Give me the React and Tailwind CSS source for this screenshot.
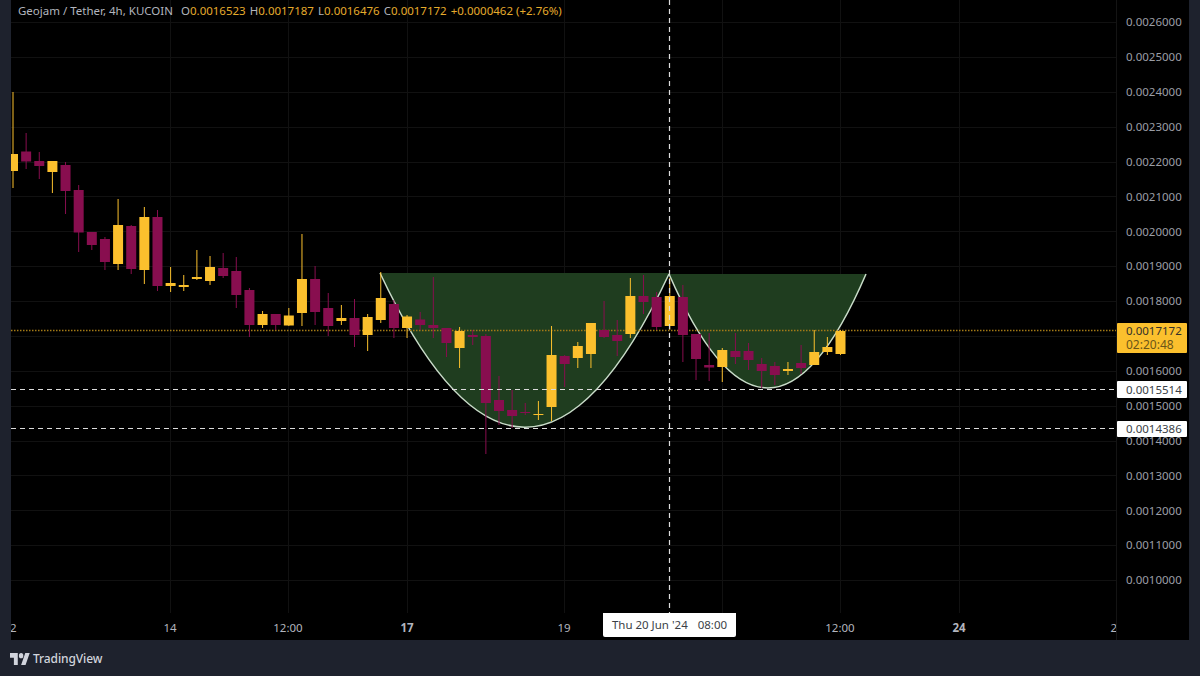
const Y = "#fbc02d";
const M = "#880e4f";
// colour, body top, body bottom, wick top, wick bottom
const bars = [
  ["y",154,171,92,188],["m",151.5,161.5,133,169],["m",161,166,152,179],["y",161,172,161,193],["m",165,191,162,214],
  ["m",190,232.5,185,252],["m",232,245,232,250],["m",239,262,237,270],["y",225,264,199,270],["m",226,269,225,274],
  ["y",217,270,207,284],["m",217,286,210,291],["y",283,286,267,292],["y",285,287,275,291],["y",277,279,250,280],
  ["y",267,281,256,285],["m",268,276,253,278],["m",271,295,257,308],["m",290,325,288,337],["y",314,325,311,328],
  ["m",314,325,314,330],["y",315.5,325.5,308,326],["y",279,313,234,326],["m",279,312,266,325],["m",308,326,293,336],
  ["y",318,321,305,325],["m",318,335,299,347],["y",317,335,314,351],["y",298,320,272,323],["m",304,328,300,338],
  ["y",316.5,328,315,338],["m",319.5,325,312,330],["m",325,328,277,338],["m",328,343,328,357],["y",331,348,327,368],
  ["m",335,337,330,345],["m",336,403,334,454],["m",400,411,376,425],["m",410,416,390,428],["m",412,413,403,415],
  ["y",414,415,401,420],["y",355,407,326,421],["m",356,364,355,387],["y",346,358,342,368],["y",323,354,323,368],
  ["m",330,337,301,338],["m",335,341,320,356],["y",296,334,278,338],["m",296,302,275,314],["m",297,327,292,330],
  ["y",296,326,278,330],["m",297,335,285,362],["m",334,359,334,380],["m",365,367.5,333,381],["y",350,367,348,382],
  ["m",351,357,333,364],["m",351,360,343,370],["m",364,371,358,388],["m",366,375,362,385],["y",369,371,362,375],
  ["m",363,368,345,374],["y",352,365,330,365],["y",347,352,337,355],["y",331,354,330,355],
];
const prices = ["26","25","24","23","22","21","20","19","18","17","16","15","14","13","12","11","10"];
const gridX = [170,288,407,564,722,840,959];
const times = [
  { x: 10, t: "12" }, { x: 170, t: "14" }, { x: 288, t: "12:00" }, { x: 407, t: "17", b: true }, { x: 564, t: "19" },
  { x: 840, t: "12:00" }, { x: 959, t: "24", b: true }, { x: 1117, t: "26" },
];
const tags = [
  { top: 381, t: "0.0015514" },
  { top: 420.5, t: "0.0014386" },
];

function Chart() {
  return (
    <svg className="block w-[1105px] h-[613px]" viewBox="11 0 1105 613">
      {prices.map((p, i) => {
        const y = Math.round(22 + i * 34.875) + 0.5;
        return <line key={p} x1="11" x2="1116" y1={y} y2={y} stroke="#111111" />;
      })}
      {gridX.map((x) => <line key={x} x1={x + 0.5} x2={x + 0.5} y1="0" y2="613" stroke="#111111" />)}
      <path d="M380 273 Q525 581 669 274 L669 273 Z" fill="#1f3d1f" />
      <path d="M669 274 Q768 502 866 274 Z" fill="#1f3d1f" />
      <path d="M380 273 Q525 581 669 274" fill="none" stroke="#c9dcc9" strokeWidth="1.5" />
      <path d="M669 274 Q768 502 866 274" fill="none" stroke="#c9dcc9" strokeWidth="1.5" />
      <line x1="11" x2="1116" y1="330.5" y2="330.5" stroke="#a37a16" strokeWidth="1.4" strokeDasharray="1.5 1.5" />
      {bars.map(([c, t, b, wt, wb], i) => {
        const x = 13 + i * 13.135;
        const col = c === "y" ? Y : M;
        return (
          <g key={i}>
            <line x1={x} x2={x} y1={wt} y2={wb} stroke={col} strokeWidth="1" />
            <rect x={x - 5} y={t} width="10" height={Math.max(b - t, 1)} fill={col} />
          </g>
        );
      })}
      <line x1="11" x2="1116" y1="389.5" y2="389.5" stroke="#dcdcdc" strokeWidth="1.2" strokeDasharray="5 4" />
      <line x1="11" x2="1116" y1="428.5" y2="428.5" stroke="#dcdcdc" strokeWidth="1.2" strokeDasharray="5 4" />
      <line x1="669.5" x2="669.5" y1="0" y2="613" stroke="#dcdcdc" strokeWidth="1.2" strokeDasharray="5 4" />
    </svg>
  );
}

export default function App() {
  return (
    <div className="w-[1200px] h-[676px] bg-[#1e222d] flex flex-col font-['Noto_Sans',sans-serif] text-[11.5px] overflow-hidden">
      <div className="mx-[11px] h-[640px] bg-black flex">
        <div className="relative w-[1105px] h-[640px]">
          <Chart />
          <div className="absolute left-[7px] top-[3px] flex gap-[4px] leading-[16px] text-[#b2b5be] whitespace-nowrap">
            <span className="mr-[4px]">Geojam / Tether, 4h, KUCOIN</span>
            <span>O<span className="text-[#e5ab2c]">0.0016523</span></span>
            <span>H<span className="text-[#e5ab2c]">0.0017187</span></span>
            <span>L<span className="text-[#e5ab2c]">0.0016476</span></span>
            <span>C<span className="text-[#e5ab2c]">0.0017172</span></span>
            <span className="text-[#e5ab2c]">+0.0000462 (+2.76%)</span>
          </div>
          <div className="relative h-[27px] overflow-hidden text-[#b2b5be]">
            {times.map((d) => (
              <span
                key={d.x}
                className={d.b ? "absolute top-[7px] leading-[16px] -translate-x-1/2 font-bold" : "absolute top-[7px] leading-[16px] -translate-x-1/2"}
                style={{ left: d.x - 11 }}
              >
                {d.t}
              </span>
            ))}
          </div>
          <div className="absolute left-[592px] top-[613px] w-[133px] h-[24px] bg-white rounded-b-[2px] flex items-center justify-center gap-[10px] text-[#3b3f47] whitespace-nowrap">
            <span>Thu 20 Jun '24</span>
            <span>08:00</span>
          </div>
        </div>
        <div className="relative w-[73px] border-l border-[#141414] pt-[4.5px] text-[#9b9ea6]">
          {prices.map((p) => (
            <div key={p} className="h-[34.875px] flex items-center pl-[9px]">{p === "17" ? "" : `0.00${p}000`}</div>
          ))}
          <div className="absolute left-0 top-[323px] w-[70px] h-[30px] bg-[#fbc02d] rounded-[1px] flex flex-col justify-center pl-[9px] leading-[14px] text-[#33302a]">
            <span>0.0017172</span>
            <span className="text-[#6b5518] text-[12px]">02:20:48</span>
          </div>
          {tags.map((g) => (
            <div key={g.t} className="absolute left-0 w-[70px] h-[16.5px] bg-white rounded-[1px] flex items-center pl-[9px] text-[#3b3f47]" style={{ top: g.top }}>
              {g.t}
            </div>
          ))}
        </div>
      </div>
      <div className="flex-1 flex items-center pl-[10px] gap-[3px] pt-[1px] text-[#d1d4dc]">
        <svg className="w-[20px] h-[12px]" viewBox="0 4 36 18" preserveAspectRatio="none" fill="#d1d4dc">
          <path d="M14 22H7V11H0V4h14v18zM28 22h-8l7.5-18h8L28 22z" />
          <circle cx="20" cy="8" r="4" />
        </svg>
        <span className="text-[12px] font-medium tracking-[-0.1px]">TradingView</span>
      </div>
    </div>
  );
}
